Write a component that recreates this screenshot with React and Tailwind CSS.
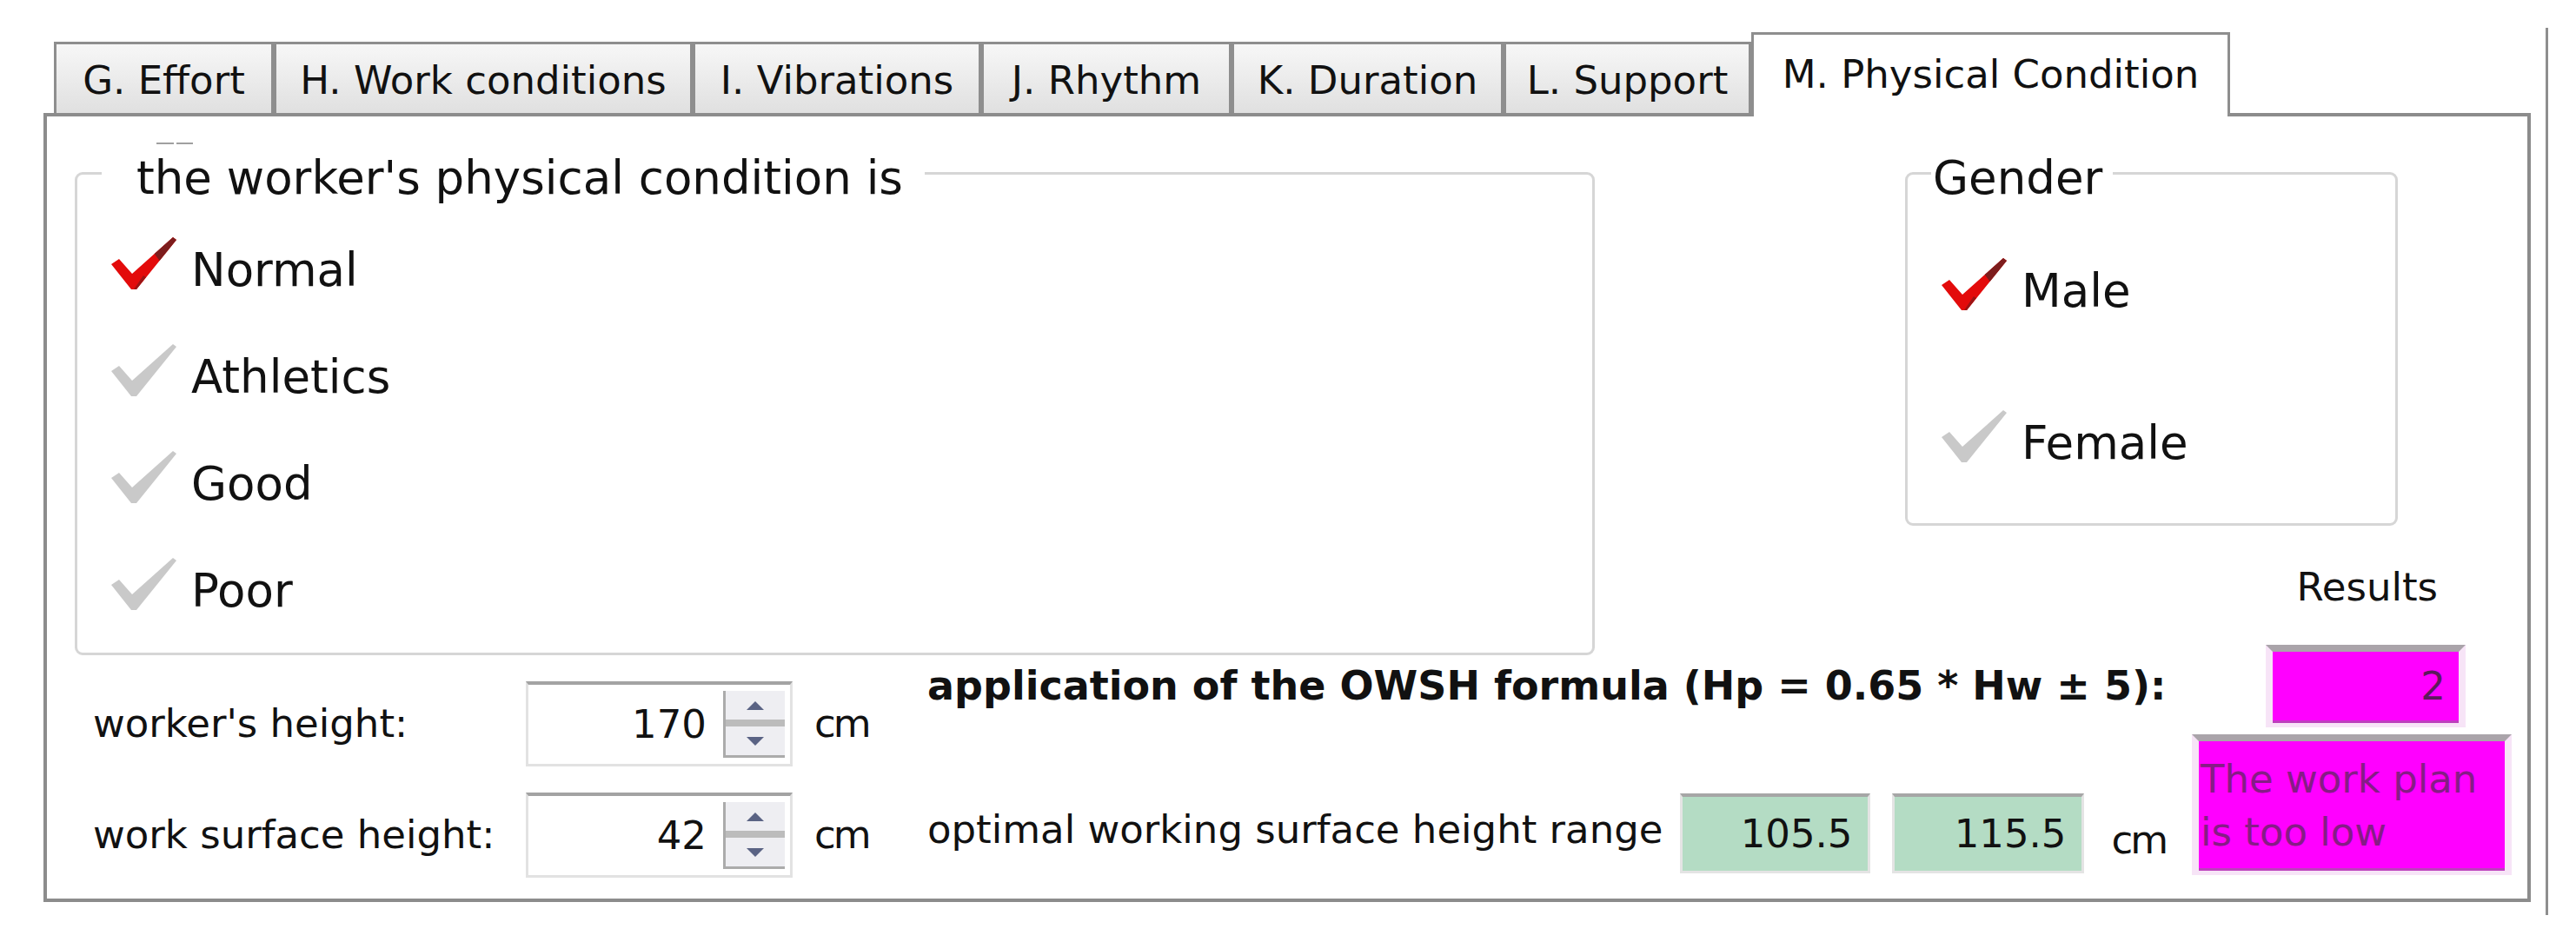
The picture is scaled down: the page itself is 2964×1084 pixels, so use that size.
import React from "react";

const tabs = [
  { label: "G. Effort", w: "w-[253px]" },
  { label: "H. Work conditions", w: "w-[482px]" },
  { label: "I. Vibrations", w: "w-[332px]" },
  { label: "J. Rhythm", w: "w-[288px]" },
  { label: "K. Duration", w: "w-[313px]" },
  { label: "L. Support", w: "w-[285px]" },
];

function Check({ on }) {
  return (
    <svg width="75" height="60" viewBox="0 0 75 60" className="shrink-0">
      <polygon
        points="0,31 9,25 24,42 71,0 75,3 29,60 23,60"
        fill={on ? "#e30b0b" : "#c9c9c9"}
      />
      {on && <polygon points="49.7,19 71,0 75,3 55.6,27" fill="#7d1d1d" />}
      {on && <polygon points="26,60 29,60 40,46 37,44" fill="#9a1515" />}
    </svg>
  );
}

function Option({ on, label }) {
  return (
    <div className="flex items-center h-[80px] pl-[39px]">
      <Check on={on} />
      <span className="ml-[17px] pt-[15px] text-[53px] leading-[60px] whitespace-nowrap">
        {label}
      </span>
    </div>
  );
}

function Arrow({ up }) {
  return (
    <svg width="20" height="10" viewBox="0 0 20 10">
      <polygon points={up ? "10,0 20,10 0,10" : "0,0 20,0 10,10"} fill="#5a6384" />
    </svg>
  );
}

function SpinBox({ value }) {
  return (
    <div className="w-[307px] h-[98px] border-t-[4px] border-x-[3px] border-b-[3px] border-t-[#a3a3a3] border-x-[#e2e2e2] border-b-[#e2e2e2] bg-white flex items-center justify-end">
      <span className="text-[45px] leading-[52px]">{value}</span>
      <div className="ml-[19px] mr-[6px] w-[71px] h-[77px] border-l-[3px] border-b-[3px] border-[#ababab] flex flex-col">
        <div className="flex-1 bg-[#eeeef2] flex items-center justify-center">
          <Arrow up />
        </div>
        <div className="h-[8px] bg-[#bcbcbc]" />
        <div className="flex-1 bg-[#eeeef2] flex items-center justify-center">
          <Arrow />
        </div>
      </div>
    </div>
  );
}

function InputRow({ label, value, mt }) {
  return (
    <div className={`flex items-center h-[98px] ${mt}`}>
      <span className="w-[498px] text-[45px] leading-[52px] whitespace-nowrap">{label}</span>
      <SpinBox value={value} />
      <span className="ml-[25px] text-[45px] leading-[52px] tracking-[-3px]">cm</span>
    </div>
  );
}

function GreenBox({ value, w }) {
  return (
    <div
      className={`${w} h-[92px] border-t-[4px] border-x-[3px] border-b-[3px] border-t-[#a6a6a6] border-x-[#e4e4e4] border-b-[#e4e4e4] bg-[#b4dcc4] flex items-center justify-end pr-[18px]`}
    >
      <span className="text-[45px] leading-[52px]">{value}</span>
    </div>
  );
}

export default function App() {
  return (
    <div className="w-[2964px] h-[1084px] bg-white overflow-hidden pt-[32px] font-['DejaVu_Sans',sans-serif] text-[#111]">
      <div className="w-[2932px] h-[1021px] border-r-[3px] border-[#8e8e8e] pl-[50px] pt-[5px]">
        <div className="w-[2862px]">
          {/* tab strip */}
          <div className="flex items-end h-[93px] pl-[12px]">
            {tabs.map((t) => (
              <div
                key={t.label}
                className={`${t.w} h-[82px] border-t-[3px] border-x-[3px] border-[#8e8e8e] bg-linear-to-b from-[#f7f7f7] to-[#e0e0e0] flex items-center justify-center pt-[4px] text-[45px] leading-[52px] whitespace-nowrap`}
              >
                {t.label}
              </div>
            ))}
            <div className="w-[551px] h-[97px] -mb-[4px] relative z-10 bg-white border-t-[3px] border-x-[3px] border-[#8e8e8e] flex items-start justify-center pt-[20px] text-[45px] leading-[52px] whitespace-nowrap">
              M. Physical Condition
            </div>
          </div>

          {/* panel */}
          <div className="h-[908px] border-[4px] border-[#8c8c8c] bg-white">
            {/* section 1 */}
            <div className="flex items-start h-[618px]">
              <div className="flex flex-col">
                <div className="flex gap-[3px] ml-[126px] mt-[30px] h-[2px]">
                  <div className="w-[20px] bg-[#a0a0a0]" />
                  <div className="w-[19px] bg-[#a0a0a0]" />
                </div>
                <div className="mt-[32px] ml-[32px] w-[1749px] h-[556px] border-[3px] border-[#d6d6d6] rounded-[9px]">
                  <div className="-mt-[22px] ml-[28px] flex">
                    <span className="bg-white pl-[40px] pr-[25px] text-[53px] leading-[52px] whitespace-nowrap">
                      the worker's physical condition is
                    </span>
                  </div>
                  <div className="mt-[32px] flex flex-col gap-[43px]">
                    <Option on label="Normal" />
                    <Option label="Athletics" />
                    <Option label="Good" />
                    <Option label="Poor" />
                  </div>
                </div>
              </div>

              <div className="ml-[357px] w-[613px] mt-[64px] flex flex-col">
                <div className="w-[567px] h-[407px] border-[3px] border-[#d6d6d6] rounded-[9px]">
                  <div className="-mt-[22px] ml-[27px] flex">
                    <span className="bg-white pl-[2px] pr-[12px] text-[53px] leading-[52px]">
                      Gender
                    </span>
                  </div>
                  <div className="mt-[56px] flex flex-col gap-[95px]">
                    <Option on label="Male" />
                    <Option label="Female" />
                  </div>
                </div>
                <div className="mt-[45px] text-right text-[45px] leading-[52px]">Results</div>
              </div>
            </div>

            {/* section 2 */}
            <div className="flex items-start">
              <div className="ml-[53px] w-[960px] flex flex-col">
                <InputRow label="worker's height:" value="170" mt="mt-[32px]" />
                <InputRow label="work surface height:" value="42" mt="mt-[30px]" />
              </div>

              <div className="w-[1455px] flex flex-col">
                <div className="mt-[11px] text-[46px] leading-[52px] font-bold whitespace-nowrap">
                  application of the OWSH formula (Hp = 0.65 * Hw ± 5):
                </div>
                <div className="mt-[98px] flex items-center h-[92px]">
                  <span className="mb-[9px] text-[45px] leading-[52px] whitespace-nowrap">
                    optimal working surface height range
                  </span>
                  <div className="ml-[20px]">
                    <GreenBox value="105.5" w="w-[219px]" />
                  </div>
                  <div className="ml-[25px]">
                    <GreenBox value="115.5" w="w-[221px]" />
                  </div>
                  <span className="ml-[31px] mt-[16px] text-[45px] leading-[52px] tracking-[-3px]">
                    cm
                  </span>
                </div>
              </div>

              <div className="-mt-[10px] w-[368px] flex flex-col">
                <div className="ml-[85px] w-[230px] h-[95px] border-t-[8px] border-x-[8px] border-b-[5px] border-t-[#aaa4aa] border-x-[#f7e4f7] border-b-[#f7e4f7]">
                  <div className="h-full bg-[#ff00ff] border-b-[3px] border-[#bd3fbd] flex items-center justify-end pr-[15px]">
                    <span className="text-[45px] leading-[52px] text-[#5c1a5c]">2</span>
                  </div>
                </div>
                <div className="mt-[8px] w-[368px] h-[162px] border-t-[8px] border-x-[8px] border-b-[5px] border-t-[#aaa4aa] border-x-[#f7e4f7] border-b-[#f7e4f7]">
                  <div className="h-full bg-[#ff00ff] border-b-[3px] border-[#bd3fbd] pl-[2px] pt-[13px] text-[45px] leading-[61px] text-[#861c86]">
                    The work plan
                    <br />
                    is too low
                  </div>
                </div>
              </div>
            </div>
          </div>
        </div>
      </div>
    </div>
  );
}
